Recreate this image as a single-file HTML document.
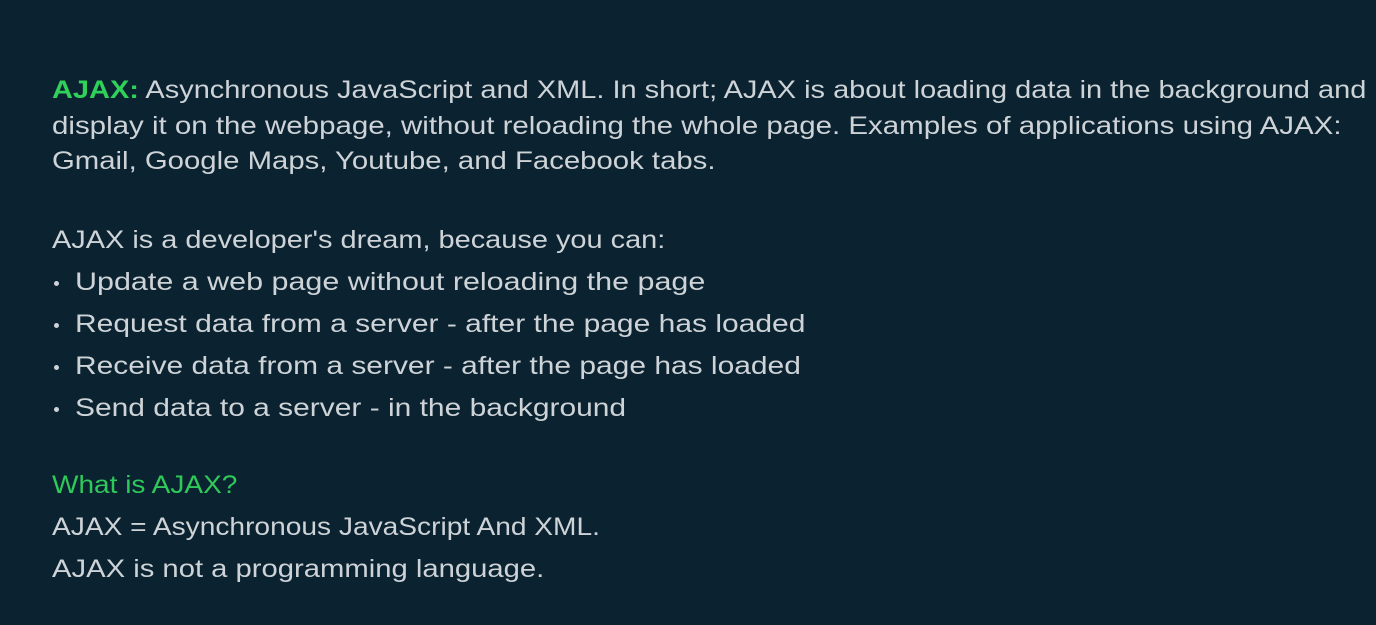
<!DOCTYPE html>
<html><head><style>
html,body{margin:0;padding:0;}
body{width:1376px;height:625px;background:#0b2230;overflow:hidden;position:relative;font-family:"Liberation Sans",sans-serif;font-size:25px;color:#cdd3d7;}
.l{position:absolute;left:52px;white-space:nowrap;line-height:30px;transform-origin:0 50%;}
.g{color:#2fd15b;font-weight:bold;}
.gg{color:#2fc95a;}
.b{position:absolute;left:75px;white-space:nowrap;line-height:30px;transform-origin:0 50%;}
.d{position:absolute;left:54px;width:5px;height:5px;border-radius:50%;background:#cdd3d7;}
</style></head><body>
<div class="l" style="top:75px;transform:scaleX(1.159)"><span class="g">AJAX:</span> Asynchronous JavaScript and XML. In short; AJAX is about loading data in the background and</div>
<div class="l" style="top:111px;transform:scaleX(1.179)">display it on the webpage, without reloading the whole page. Examples of applications using AJAX:</div>
<div class="l" style="top:146px;transform:scaleX(1.173)">Gmail, Google Maps, Youtube, and Facebook tabs.</div>
<div class="l" style="top:225px;transform:scaleX(1.157)">AJAX is a developer's dream, because you can:</div>
<div class="d" style="top:281px"></div>
<div class="b" style="top:267px;transform:scaleX(1.219)">Update a web page without reloading the page</div>
<div class="d" style="top:323px"></div>
<div class="b" style="top:309px;transform:scaleX(1.2)">Request data from a server - after the page has loaded</div>
<div class="d" style="top:365px"></div>
<div class="b" style="top:351px;transform:scaleX(1.198)">Receive data from a server - after the page has loaded</div>
<div class="d" style="top:407px"></div>
<div class="b" style="top:393px;transform:scaleX(1.198)">Send data to a server - in the background</div>
<div class="l gg" style="top:470px;transform:scaleX(1.121)">What is AJAX?</div>
<div class="l" style="top:512px;transform:scaleX(1.125)">AJAX = Asynchronous JavaScript And XML.</div>
<div class="l" style="top:554px;transform:scaleX(1.169)">AJAX is not a programming language.</div>
</body></html>
